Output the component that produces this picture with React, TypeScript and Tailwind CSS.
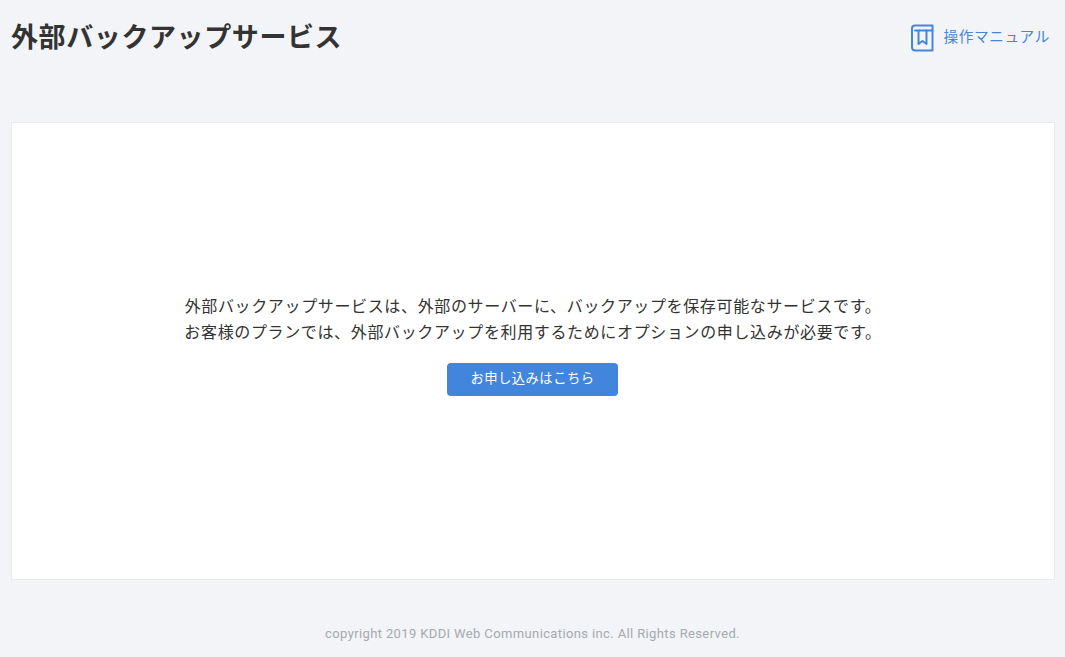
const jp = "font-['Roboto','Noto_Sans_CJK_JP',sans-serif]";

function ManualIcon() {
  return (
    <svg width="23" height="28" viewBox="0 0 23 28" fill="none" stroke="#4285dc" strokeWidth="2" strokeLinejoin="round" strokeLinecap="round">
      <path d="M4 1.5H21.5V26.5H4.5C2.5 26.5 1 25 1 23V4.5C1 2.8 2.3 1.5 4 1.5Z" />
      <path d="M4 6.5H21.5" />
      <path d="M7.5 6.5V20L11.5 17L15.5 20V6.5" />
    </svg>
  );
}

export default function App() {
  return (
    <div className={`${jp} min-h-[657px] bg-[#f2f4f8] flex flex-col text-[#333]`}>
      <header className="h-[122px] flex items-start justify-between pl-[11px] pr-[15px] shrink-0">
        <h1 className="mt-[18px] text-[27px] leading-10 font-bold tracking-[0.6px] text-[#333]">外部バックアップサービス</h1>
        <a className="mt-6 flex items-center gap-[9px] text-[#4285dc] text-[14.6px] tracking-[0.7px]">
          <ManualIcon />
          <span>操作マニュアル</span>
        </a>
      </header>
      <main className="mx-[11px] w-[1044px] h-[458px] shrink-0 bg-white border border-[#e8eaee] flex flex-col items-center justify-center pb-[13px]">
        <p className="text-base leading-[26px] tracking-[0.64px] text-center text-[#333]">
          外部バックアップサービスは、外部のサーバーに、バックアップを保存可能なサービスです。<br />
          お客様のプランでは、外部バックアップを利用するためにオプションの申し込みが必要です。
        </p>
        <button className="mt-[17px] mr-[2px] pl-[1px] w-[171px] h-[33px] rounded-[4px] bg-[#4285dc] text-white text-[13.33px] tracking-[0.45px]">
          お申し込みはこちら
        </button>
      </main>
      <footer className="mt-[45px] text-center text-[#a6a9ae] text-[13px] tracking-[0.375px] leading-[18px]">
        copyright 2019 KDDI Web Communications inc. All Rights Reserved.
      </footer>
    </div>
  );
}
